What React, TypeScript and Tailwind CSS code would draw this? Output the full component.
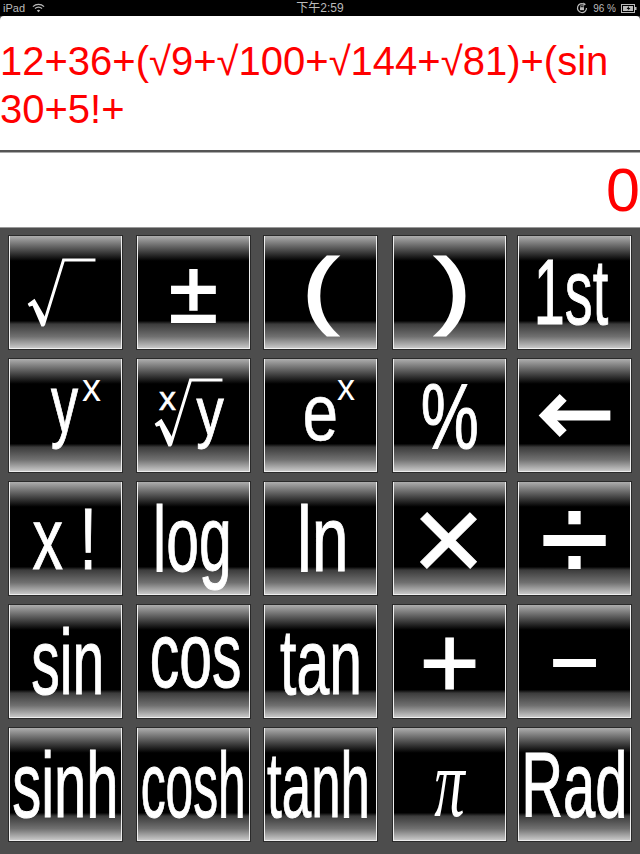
import React from "react";

const Root = ({ className = "" }: { className?: string }) => (
  <svg viewBox="0 0 115 115" className={"h-[115px] w-[115px] " + className} fill="none">
    <path d="M35 92 L55.5 25.5 L88 25.5" stroke="white" strokeWidth="3" />
    <path d="M19 70 L26 65 L37 84 L35.5 93 L33 93 L24 72 L20.5 73 Z" fill="white" />
  </svg>
);

function Btn({ children, className = "" }: { children?: React.ReactNode; className?: string }) {
  return (
    <div className={"relative flex h-[115px] w-[115px] items-center justify-center whitespace-nowrap border border-[#2a2a2a] bg-[linear-gradient(to_bottom,#aeaeae_0%,#000_22%,#000_75%,#3c3c3c_78%,#707070_89%,#cfcfcf_100%)] font-['Liberation_Sans',sans-serif] text-white shadow-[inset_1px_0_0_#eee,inset_-1px_0_0_#eee,inset_0_-1px_0_#eee] " + className}>
      {children}
    </div>
  );
}

const L = ({ className, children }: { className: string; children: React.ReactNode }) => (
  <span className={"inline-block leading-none " + className}>{children}</span>
);

const W = ({ className, children }: { className: string; children: React.ReactNode }) => (
  <span className={"inline-block leading-none [-webkit-text-stroke:1px_white] " + className}>{children}</span>
);

export default function App() {
  return (
    <div className="flex h-[854px] w-[640px] flex-col overflow-hidden bg-[#4d4d4d] font-['Liberation_Sans',sans-serif]">
      <div className="flex h-4 shrink-0 items-center justify-between bg-black px-[3px] text-[11px] text-[#bbb]">
        <div className="flex w-[120px] items-center gap-[7px]">
          <span>iPad</span>
          <svg viewBox="0 0 14 10" className="h-[10px] w-[13px]" fill="none" stroke="#bbb" strokeWidth="1.4">
            <path d="M1 3.5 C4.5 0.3 9.5 0.3 13 3.5" />
            <path d="M3.2 5.6 C5.4 3.8 8.6 3.8 10.8 5.6" />
            <path d="M7 9.5 L5.2 7.6 C6.2 6.8 7.8 6.8 8.8 7.6 Z" fill="#bbb" stroke="none" />
          </svg>
        </div>
        <span className="font-['Liberation_Sans','Noto_Sans_CJK_TC',sans-serif] text-[12px]">下午2:59</span>
        <div className="flex w-[120px] items-center justify-end gap-[4px] text-[10px]">
          <svg viewBox="0 0 12 12" className="h-3 w-3" fill="none" stroke="#bbb" strokeWidth="1.2">
            <path d="M10.5 6 A4.5 4.5 0 1 1 8 2" />
            <path d="M7.4 0.4 L10 2.3 L7.4 4 Z" fill="#bbb" stroke="none" />
            <rect x="4" y="5.2" width="4" height="3" fill="#bbb" stroke="none" />
            <path d="M4.8 5.2 V4 a1.2 1.2 0 0 1 2.4 0 V5.2" strokeWidth="0.8" />
          </svg>
          <span className="mx-[1px]">96 %</span>
          <svg viewBox="0 0 16 9" className="h-[9px] w-4">
            <rect x="0.5" y="0.5" width="13" height="8" fill="none" stroke="#bbb" />
            <rect x="2" y="2" width="10" height="5" fill="#bbb" />
            <rect x="14" y="3" width="1.5" height="3" fill="#bbb" />
            <path d="M8 2 L5.5 5 H7.5 L6.5 7 L9.5 4 H7.8 Z" fill="#000" />
          </svg>
        </div>
      </div>
      <div className="h-[134px] shrink-0 rounded-t-[4px] bg-white pt-[21px] text-[40px] leading-[48px] text-[#ff0000]">
        12+36+(√9+√100+√144+√81)+(sin
        <br />
        30+5!+
      </div>
      <div className="h-[3px] shrink-0 border-b border-[#aaa] bg-[#555]" />
      <div className="flex h-[74px] shrink-0 items-center justify-end bg-white text-[61px] leading-none text-[#ff0000]">0</div>
      <div className="grid flex-1 grid-cols-[128px_127px_129px_125px_115px] content-start gap-y-[8px] border-t border-[#999] pl-2 pt-[7px]">
        <Btn><Root className="-translate-y-px" /></Btn>
        <Btn><L className="-translate-y-[1px] text-[88px] [-webkit-text-stroke:2px_white]">±</L></Btn>
        <Btn><L className="-translate-x-[1px] -translate-y-[4px] scale-x-[1.2] text-[84px] [-webkit-text-stroke:3px_white]">(</L></Btn>
        <Btn><L className="translate-x-[3px] -translate-y-[4px] scale-x-[1.2] text-[84px] [-webkit-text-stroke:3px_white]">)</L></Btn>
        <Btn><W className="-translate-x-[3px] scale-x-[0.6] text-[93px]">1st</W></Btn>

        <Btn>
          <span className="absolute left-[35px] top-[4px] scale-x-[0.66] text-[82px] leading-none [-webkit-text-stroke:1px_white]">y</span>
          <span className="absolute left-[73px] top-[10px] text-[38px] leading-none">x</span>
        </Btn>
        <Btn>
          <span className="absolute left-[22px] top-[22px] text-[34px] leading-none [-webkit-text-stroke:0.5px_white]">x</span>
          <Root className="-translate-x-px -translate-y-[4px]" />
          <span className="absolute left-[56px] top-[18px] scale-x-[0.8] text-[68px] leading-none [-webkit-text-stroke:1px_white]">y</span>
        </Btn>
        <Btn>
          <span className="absolute left-[34px] top-[14px] scale-x-[0.8] text-[80px] leading-none [-webkit-text-stroke:0.5px_white]">e</span>
          <span className="absolute left-[73px] top-[11px] text-[36px] leading-none">x</span>
        </Btn>
        <Btn><W className="scale-x-[0.71] text-[92px]">%</W></Btn>
        <Btn>
          <svg viewBox="0 0 115 115" className="h-[115px] w-[115px]" fill="none">
            <path d="M94 57.5 H32" stroke="white" strokeWidth="10" />
            <path d="M46 39 L28 57.5 L46 76" stroke="white" strokeWidth="10" />
          </svg>
        </Btn>

        <Btn><W className="-translate-x-px scale-x-[0.69] text-[88px]">x !</W></Btn>
        <Btn><W className="-translate-x-[1px] scale-x-[0.64] text-[92px]">log</W></Btn>
        <Btn><W className="translate-x-[2px] scale-x-[0.72] text-[92px]">ln</W></Btn>
        <Btn><W className="-translate-x-[1px] text-[125px]">×</W></Btn>
        <Btn><L className="text-[124px] [-webkit-text-stroke:2px_white]">÷</L></Btn>

        <Btn><W className="translate-x-[2px] scale-x-[0.62] text-[92px]">sin</W></Btn>
        <Btn><W className="translate-x-[2px] -translate-y-[7px] scale-x-[0.64] text-[92px]">cos</W></Btn>
        <Btn><W className="scale-x-[0.64] text-[92px]">tan</W></Btn>
        <Btn><W className="text-[104px]">+</W></Btn>
        <Btn><L className="text-[84px] [-webkit-text-stroke:2px_white]">−</L></Btn>

        <Btn><W className="scale-x-[0.63] text-[92px]">sinh</W></Btn>
        <Btn><W className="scale-x-[0.54] text-[92px]">cosh</W></Btn>
        <Btn><W className="-translate-x-[2px] scale-x-[0.575] text-[92px]">tanh</W></Btn>
        <Btn><L className="-translate-y-[2px] scale-x-[0.62] font-['Liberation_Serif',serif] text-[98px] italic">π</L></Btn>
        <Btn><W className="scale-x-[0.63] text-[92px]">Rad</W></Btn>
      </div>
    </div>
  );
}
